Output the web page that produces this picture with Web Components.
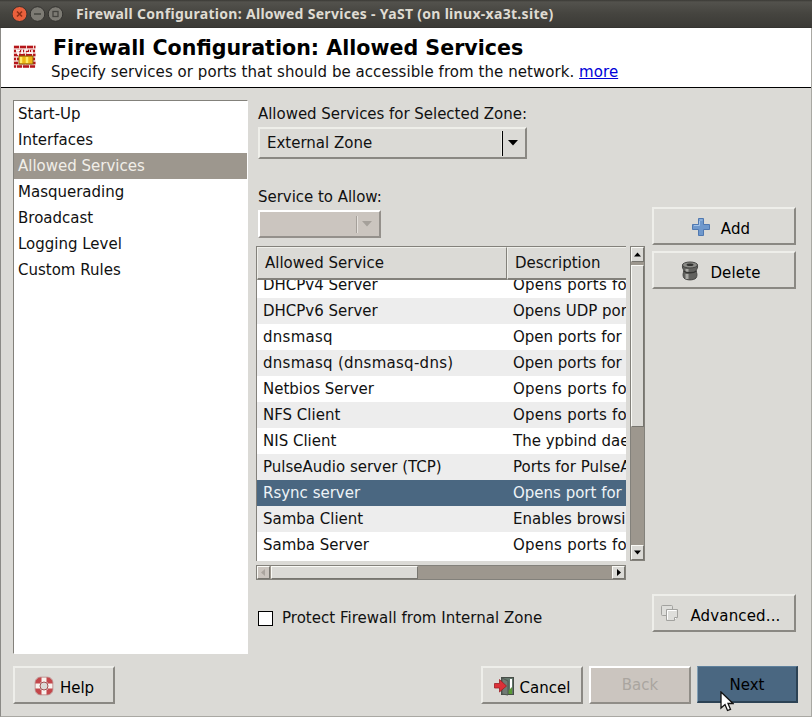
<!DOCTYPE html>
<html lang="en">
<head>
<meta charset="utf-8">
<title>Firewall Configuration: Allowed Services</title>
<style>
html,body{margin:0;padding:0;width:812px;height:717px;overflow:hidden}
body{font:15px/20px "DejaVu Sans",sans-serif;color:#111;position:relative;
--bg:#dbdad6;--hi:#efefea;--lo:#83817b;--trough:#9d978e;--sel:#4a6781}
</style>
</head>
<body>
<yast-window></yast-window>
<mouse-pointer></mouse-pointer>
<script>
function define(name, html, setup){
  const t=document.createElement('template'); t.innerHTML=html;
  customElements.define(name, class extends HTMLElement{
    constructor(){super();this.attachShadow({mode:'open'}).append(t.content.cloneNode(true));}
    connectedCallback(){ if(setup) setup(this,this.shadowRoot); }
  });
}

define('title-bar', `<style>
:host{display:flex;box-sizing:border-box;height:28px;align-items:center;padding:0 0 0 12px;background:linear-gradient(#3a3935 0,#53524d 2px,#45443f 14px,#3b3a36 27px,#2e2d2a 28px);
font:bold 14px/20px "Noto Sans",sans-serif;color:#dfdbd2;white-space:nowrap}
svg{flex:none;width:54px;height:18px}
span{margin-left:10px;letter-spacing:.3px}
</style>
<svg viewBox="0 0 54 18"><g stroke-width="1">
<circle cx="7.500" cy="9" r="7.500" fill="#ea603c" stroke="#35322f"/><path d="M5 6.500l5 5m0-5l-5 5" stroke="#8d2f16" stroke-width="1.600"/>
<circle cx="25.500" cy="9" r="7.300" fill="#7d7b74" stroke="#33322f"/><path d="M22 9h7" stroke="#45443f" stroke-width="1.500"/>
<circle cx="43.500" cy="9" r="7.300" fill="#7d7b74" stroke="#33322f"/><rect x="41" y="6.500" width="5" height="5" fill="none" stroke="#45443f" stroke-width="1.300"/></g></svg>
<span><slot></slot></span>`);

define('page-heading', `<style>
:host{display:flex;box-sizing:border-box;height:60px;background:#fff;border-bottom:1px solid #000;padding:8px 0 0 11px}
svg{width:24px;height:25px;margin-top:8px;flex:none}
div{margin-left:15px}
h1{font:bold 20.600px/24px "DejaVu Sans",sans-serif;color:#000;margin:0 0 0 2px;white-space:nowrap}
p{margin:2px 0 0;white-space:nowrap;letter-spacing:.055px}
a{color:#0000d8;text-decoration:underline}
</style>
<svg viewBox="0 0 24 25"><rect x="1.500" y="1.500" width="22" height="22" fill="#f3d9d4"/>
<path d="M2 3h5m1 0h6m1 0h6m1 0h1.500M2 7h2m1 0h5m1 0h6m1 0h5M2 11h4m1 0h6m1 0h6m1 0h2.500M2 15h2m1 0h5m1 0h6m1 0h5M2 19h4m1 0h6m1 0h6m1 0h2.500M2 22.500h2m1 0h5m1 0h6m1 0h5" stroke="#b5161b" stroke-width="2.600"/>
<path d="M4 6.500h4M6 6v5M10 6v4M13 9V6h3M15 9h4M20 6v4" stroke="#fff" stroke-width="1.600" fill="none"/>
<rect x="7" y="12" width="14" height="8" fill="#efb716" stroke="#8a5a0d"/><path d="M9 13v6M15 13v6" stroke="#ffed65" stroke-width="2.500"/></svg>
<div><h1><slot name="title"></slot></h1><p><slot></slot> <a><slot name="link"></slot></a></p></div>`);

define('side-item', `<style>
:host{display:block;height:26px;line-height:26px;padding-left:4px;white-space:nowrap}
:host([selected]){background:var(--trough);color:#f1eee8}
</style><slot></slot>`);

define('side-list', `<style>
:host{display:block;box-sizing:border-box;width:235px;height:554px;background:#fff;border:1px solid #83817b;border-right-color:#fff;border-bottom-color:#fff}
</style><slot></slot>`);

define('combo-box', `<style>
:host{display:flex;box-sizing:border-box;border:2px solid;border-color:var(--hi) #8a8883 #8a8883 var(--hi);background:var(--bg);align-items:center;height:32px;width:269px;padding-left:7px}
span{flex:1;padding-bottom:1px}
i{width:1px;height:25px;background:#000;box-shadow:-1px 0 #eeeee9}
svg{width:10px;height:6px;margin:0 7px 0 5px}
path{fill:#000}
:host([disabled]){width:123px;height:28px;background:#cbc5bf;border-color:#fff #94908b #94908b #fff}
:host([disabled]) i{height:17px;background:#a5a09a;box-shadow:1px 0 #e5e1dc}
:host([disabled]) path{fill:#a5a09a}
</style><span><slot></slot></span><i></i><svg viewBox="0 0 10 6"><path d="M0 0h10L5 5.500z"/></svg>`);

define('push-button', `<style>
:host{display:flex;box-sizing:border-box;width:102px;height:38px;border:2px solid;border-color:#eeeeea #8a8883 #8a8883 #eeeeea;background:var(--bg);align-items:center;justify-content:center;padding-top:5px;white-space:nowrap;color:#000}
:host([wide]){width:144px;padding-right:7px;letter-spacing:.15px}
::slotted(svg){width:20px;height:20px;margin:-4px 6px 0 0;flex:none}
:host([wide]) ::slotted(svg){margin-right:10px}
:host([disabled]){background:#cbc5bf;color:#aaa59f;border-color:#fff #908d87 #908d87 #fff;padding-top:0}
:host([primary]){width:101px;background:var(--sel);border-color:#5f809c #2c4254 #2c4254 #83a0b5;border-width:1px 2px 2px 1px;padding-top:1px;height:37px}
</style><slot name="icon"></slot><slot></slot>`);

define('check-box', `<style>
:host{display:flex;align-items:center;gap:9px;height:20px;white-space:nowrap;letter-spacing:.02px}
i{box-sizing:border-box;width:15px;height:15px;background:#fff;border:1px solid #000}
</style><i></i><span><slot></slot></span>`);

define('scroll-bar', `<style>
:host{display:flex;flex-direction:column;box-sizing:border-box;width:15px;height:315px;background:var(--trough);border:1px solid #83817b}
:host([horizontal]){flex-direction:row;width:370px;height:15px}
b{box-sizing:border-box;flex:none;background:var(--bg);border:1px solid;border-color:#fafaf6 #77756f #77756f #fafaf6;width:13px;height:15px;display:flex;align-items:center;justify-content:center}
:host([horizontal]) b{width:13px;height:13px}
b svg{width:7px;height:7px}
u{flex:1;display:flex;flex-direction:column}
:host([horizontal]) u{flex-direction:row}
u::before{content:"";box-sizing:border-box;background:var(--bg);border:1px solid;border-color:#fafaf6 #77756f #77756f #fafaf6;margin-top:3px;width:13px;height:162px}
:host([horizontal]) u::before{margin:0 0 0 1px;width:147px;height:13px}
:host([horizontal]) b:first-of-type{background:#cbc5bf}
:host([horizontal]) b:first-of-type path{fill:#aaa49e}
</style><b><svg viewBox="0 0 7 7"><path id="a"/></svg></b><u></u><b><svg viewBox="0 0 7 7"><path id="z"/></svg></b>`,
(el,r)=>{const h=el.hasAttribute('horizontal');
 r.getElementById('a').setAttribute('d',h?'M5 0v7L1 3.500z':'M0 5.500h7L3.500 1.500z');
 r.getElementById('z').setAttribute('d',h?'M2 0v7L6 3.500z':'M0 1.500h7L3.500 5.500z');});

define('service-row', `<style>
:host{display:grid;grid-template-columns:250px 1fr;height:26px;line-height:26px;flex:none;white-space:nowrap;background:#fff}
:host(:nth-child(even)){background:#ededed}
:host([selected]){background:var(--sel);color:#eef3f7}
:host([loose]) span:first-of-type{letter-spacing:.27px}
:host([wide]) span:last-of-type{letter-spacing:.25px}
span{padding-left:6px;overflow:hidden}
</style><span><slot></slot></span><span><slot name="desc"></slot></span>`);

define('service-table', `<style>
:host{display:flex;flex-direction:column;box-sizing:border-box;width:370px;height:315px;background:#fff;border-left:1px solid #83817b;border-top:1px solid #83817b;overflow:hidden}
header{display:grid;grid-template-columns:250px 1fr;height:33px;flex:none;background:var(--bg);line-height:30px}
header span{box-sizing:border-box;border:1px solid;border-color:#efefea #83817b #83817b #efefea;border-bottom-width:2px;padding-left:7px}
header span:last-child{border-right:0}
section{flex:1;display:flex;flex-direction:column;justify-content:flex-end;padding-bottom:3px;overflow:hidden}
</style><header><span>Allowed Service</span><span>Description</span></header><section><slot></slot></section>`);

define('mouse-pointer', `<style>:host{position:absolute;left:720px;top:691px;width:14px;height:21px}svg{display:block}</style>
<svg width="14" height="21" viewBox="0 0 14 21"><path d="M1 1v16l4-3.500 2.500 6 3-1.200L8 12.500h5z" fill="#fff" stroke="#111" stroke-width="1.300"/></svg>`);

define('yast-window', `<style>
:host{display:flex;flex-direction:column;box-sizing:border-box;width:812px;height:717px;background:var(--bg)}
.client{flex:1;box-sizing:border-box;border:1px solid #a9a8a3;border-top:0;border-left-color:#8b8a86}
.body{display:grid;grid-template-columns:235px 388px 144px;column-gap:8px;padding:12px 0 0 12px;height:554px}
main{display:flex;flex-direction:column;padding-top:4px}
label{display:block;margin-left:2px;height:20px;white-space:nowrap;letter-spacing:-.03px}
.c1{margin:3px 0 28px 2px}.c2{margin:3px 0 8px 2px}
.t{display:grid;grid-template-columns:370px 15px;gap:4px}
check-box{margin:28px 0 0 2px}
aside{display:flex;flex-direction:column;padding-top:107px;gap:6px}
.adv{margin-top:299px}
footer{display:flex;gap:6px;padding:12px 0 0 12px}
.cancel{margin-left:360px}
</style>
<title-bar>Firewall Configuration: Allowed Services - YaST (on linux-xa3t.site)</title-bar>
<div class="client">
<page-heading><span slot="title">Firewall Configuration: Allowed Services</span>Specify services or ports that should be accessible from the network.<span slot="link">more</span></page-heading>
<div class="body">
<side-list><side-item>Start-Up</side-item><side-item>Interfaces</side-item><side-item selected>Allowed Services</side-item><side-item>Masquerading</side-item><side-item>Broadcast</side-item><side-item>Logging Level</side-item><side-item>Custom Rules</side-item></side-list>
<main>
<label>Allowed Services for Selected Zone:</label>
<combo-box class="c1">External Zone</combo-box>
<label>Service to Allow:</label>
<combo-box class="c2" disabled></combo-box>
<div class="t">
<service-table>
<service-row wide>DHCPv4 Server<span slot="desc">Opens ports fo</span></service-row>
<service-row>DHCPv6 Server<span slot="desc">Opens UDP por</span></service-row>
<service-row loose>dnsmasq<span slot="desc">Open ports for</span></service-row>
<service-row loose>dnsmasq (dnsmasq-dns)<span slot="desc">Open ports for</span></service-row>
<service-row wide>Netbios Server<span slot="desc">Opens ports fo</span></service-row>
<service-row wide>NFS Client<span slot="desc">Opens ports fo</span></service-row>
<service-row>NIS Client<span slot="desc">The ypbind dae</span></service-row>
<service-row>PulseAudio server (TCP)<span slot="desc">Ports for PulseA</span></service-row>
<service-row selected>Rsync server<span slot="desc">Opens port for</span></service-row>
<service-row>Samba Client<span slot="desc">Enables browsi</span></service-row>
<service-row wide>Samba Server<span slot="desc">Opens ports fo</span></service-row>
</service-table>
<scroll-bar></scroll-bar>
<scroll-bar horizontal></scroll-bar>
</div>
<check-box>Protect Firewall from Internal Zone</check-box>
</main>
<aside>
<push-button wide><svg slot="icon" viewBox="0 0 20 20"><path d="M7.500 1.500h5v6h6v5h-6v6h-5v-6h-6v-5h6z" fill="#6f98cc" stroke="#5078b0"/><path d="M8.500 3h3M3 8.500h5.500V4" fill="none" stroke="#a5c4e8"/></svg>Add</push-button>
<push-button wide><svg slot="icon" viewBox="0 0 20 20"><path d="M2.500 4c-.5 3 .8 4 1.500 6-1 2-1.500 5 0 7 2 2.500 10 2.500 12 0 1.500-2 1-5 0-7 .7-2 2-3 1.500-6z" fill="#62625f" stroke="#454543"/><path d="M7 8v3M7 13v5" stroke="#aaaaa6" stroke-width="3"/><path d="M3.500 10c3 2.300 10 2.300 13 0" fill="none" stroke="#353533" stroke-width="1.300"/><ellipse cx="10" cy="4" rx="7.500" ry="3" fill="#8b8b87" stroke="#454543"/><ellipse cx="10" cy="3.700" rx="3.500" ry="1.300" fill="#343432"/></svg>Delete</push-button>
<push-button wide class="adv"><svg slot="icon" viewBox="0 0 20 20"><g fill="#dededb" stroke="#a2a29f"><rect x="1.500" y="1.500" width="11" height="10" rx="1"/><path d="M6.500 5.500h11v8l-3 3h-8z"/><path d="M14.500 16.500v-3h3" fill="#fff"/></g><path d="M7.500 15.500v-9h9" fill="none" stroke="#fff"/></svg>Advanced...</push-button>
</aside>
</div>
<footer>
<push-button><svg slot="icon" viewBox="0 0 20 20"><rect x="3.500" y="3.500" width="13" height="13" rx="4" fill="none" stroke="#c4474b" stroke-width="5"/><path d="M7.500 3.500h5M7.500 16.500h5M3.500 7.500v5M16.500 7.500v5" stroke="#f8f2ee" stroke-width="5"/><rect x="1.200" y="1.200" width="17.600" height="17.600" rx="5" fill="none" stroke="#b98080" stroke-width=".8"/><circle cx="10" cy="10" r="4" fill="#dbdad6" stroke="#a64e50"/></svg>Help</push-button>
<push-button class="cancel"><svg slot="icon" viewBox="0 0 20 20"><rect x="7.500" y="1.500" width="12" height="17" fill="#61756a" stroke="#474d47"/><path d="M13 16l5-5v7h-5z" fill="#5b9a36"/><path d="M16 3h2v8l-2 2z" fill="#fff"/><path d="M8 2l6 3v14l-6-1z" fill="#707b74" stroke="#4f5750"/><path d="M.5 7.500h5v-4l7 6.500-7 6v-4h-5z" fill="#dc3038" stroke="#9b1d23" stroke-width=".8"/></svg>Cancel</push-button>
<push-button disabled>Back</push-button>
<push-button primary>Next</push-button>
</footer>
</div>`);
</script>
</body>
</html>
